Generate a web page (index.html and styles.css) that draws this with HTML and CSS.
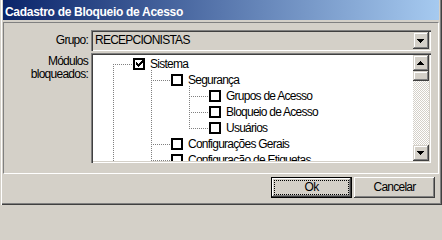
FILE: index.html
```html
<!DOCTYPE html>
<html lang="pt">
<head>
<meta charset="utf-8">
<title>Cadastro de Bloqueio de Acesso</title>
<link rel="stylesheet" href="styles.css">
</head>
<body>
<div class="window">
  <div class="titlebar">Cadastro de Bloqueio de Acesso</div>
  <div class="panel">
    <div class="form">
      <div class="lbl lbl-grupo">Grupo:</div>
      <div class="combo">
        <span class="combo-text">RECEPCIONISTAS</span>
        <span class="btn3d combo-btn"><svg width="7" height="4" viewBox="0 0 7 4"><path d="M0 0H7V1H6V2H5V3H4V4H3V3H2V2H1V1H0Z" fill="#000"/></svg></span>
      </div>
      <div class="lbl lbl-mod">Módulos<br>bloqueados:</div>
      <div class="tree">
        <div class="tree-canvas">
          <svg class="tree-lines" width="320" height="106" viewBox="0 0 320 106" shape-rendering="crispEdges">
            <g stroke="#808080" stroke-width="1" stroke-dasharray="1 1" fill="none">
              <path d="M20.5 9V106"/>
              <path d="M20 9.5H40"/>
              <path d="M58.5 15V106"/>
              <path d="M58 25.5H78"/>
              <path d="M58 89.5H78"/>
              <path d="M58 105.5H78"/>
              <path d="M96.5 31V74"/>
              <path d="M96 41.5H116"/>
              <path d="M96 57.5H116"/>
              <path d="M96 73.5H116"/>
            </g>
          </svg>
          <div class="node l0"><span class="chk"><svg width="8" height="8" viewBox="0 0 8 8"><path transform="translate(1 0)" d="M6 0h1v1h-1z M5 1h2v1h-2z M0 2h1v1h-1z M4 2h3v1h-3z M0 3h2v1h-2z M3 3h3v1h-3z M0 4h5v1h-5z M1 5h3v1h-3z M2 6h1v1h-1z" fill="#000"/></svg></span><span class="txt">Sistema</span></div>
          <div class="node l1"><span class="chk"></span><span class="txt">Segurança</span></div>
          <div class="node l2"><span class="chk"></span><span class="txt">Grupos de Acesso</span></div>
          <div class="node l2"><span class="chk"></span><span class="txt">Bloqueio de Acesso</span></div>
          <div class="node l2"><span class="chk"></span><span class="txt">Usuários</span></div>
          <div class="node l1"><span class="chk"></span><span class="txt">Configurações Gerais</span></div>
          <div class="node l1"><span class="chk"></span><span class="txt">Configuração de Etiquetas</span></div>
        </div>
        <div class="vscroll">
          <div class="btn3d sb-btn"><svg width="7" height="4" viewBox="0 0 7 4"><path d="M3 0H4V1H5V2H6V3H7V4H0V3H1V2H2V1H3Z" fill="#000"/></svg></div>
          <div class="btn3d sb-thumb"></div>
          <div class="sb-track"></div>
          <div class="btn3d sb-btn"><svg width="7" height="4" viewBox="0 0 7 4"><path d="M0 0H7V1H6V2H5V3H4V4H3V3H2V2H1V1H0Z" fill="#000"/></svg></div>
        </div>
      </div>
    </div>
  </div>
  <div class="footer">
    <button class="btn btn-default" type="button"><span class="focus">Ok</span></button>
    <button class="btn" type="button"><span class="cap">Cancelar</span></button>
  </div>
</div>
</body>
</html>
```
FILE: styles.css
```css
* { box-sizing: border-box; }

html, body {
  margin: 0;
  padding: 0;
  background: #d4d0c8;
}

body {
  width: 442px;
  height: 205px;
  overflow: hidden;
  font-family: "Liberation Sans", Arial, sans-serif;
  font-size: 12px;
  letter-spacing: -0.75px;
  color: #000;
}

.window {
  width: 442px;
  height: 205px;
  display: flex;
  flex-direction: column;
  padding: 0 3px 3px 3px;
  background: #d4d0c8;
  box-shadow:
    inset 1px 0 0 #d4d0c8,
    inset 2px 0 0 #ffffff,
    inset -1px -1px 0 #404040,
    inset -2px -2px 0 #808080;
}

.titlebar {
  flex: none;
  height: 20px;
  padding: 6px 0 0 2px;
  line-height: 13px;
  background: linear-gradient(to right, #0a246a, #a6caf0);
  color: #fff;
  font-weight: bold;
  font-size: 12px;
  letter-spacing: -0.3px;
  white-space: nowrap;
}

.panel {
  flex: none;
  height: 152px;
  margin-top: 2px;
  border-top: 1px solid #808080;
  border-left: 1px solid #808080;
  border-bottom: 1px solid #ffffff;
  border-right: 1px solid #ffffff;
  padding-top: 7px;
}

.form {
  display: grid;
  grid-template-columns: 84px 340px;
  column-gap: 3px;
  row-gap: 2px;
}

.lbl {
  text-align: right;
  white-space: nowrap;
}

.lbl-grupo {
  align-self: center;
  line-height: 13px;
}

.lbl-mod {
  align-self: start;
  padding-top: 2px;
  line-height: 13px;
}

.combo {
  height: 21px;
  display: flex;
  padding: 2px;
  background: #d4d0c8;
  box-shadow:
    inset 1px 1px 0 #808080,
    inset 2px 2px 0 #404040,
    inset -1px -1px 0 #ffffff,
    inset -2px -2px 0 #d4d0c8;
}

.combo-text {
  flex: 1;
  padding-left: 2px;
  line-height: 17px;
  white-space: nowrap;
}

.btn3d {
  background: #d4d0c8;
  box-shadow:
    inset -1px -1px 0 #404040,
    inset 1px 1px 0 #d4d0c8,
    inset -2px -2px 0 #808080,
    inset 2px 2px 0 #ffffff;
}

.combo-btn {
  flex: none;
  width: 16px;
  display: flex;
  align-items: center;
  justify-content: center;
}

.combo-btn svg,
.sb-btn svg {
  display: block;
  margin-left: -1px;
}

.tree {
  height: 110px;
  display: flex;
  padding: 2px;
  background: #ffffff;
  box-shadow:
    inset 1px 1px 0 #808080,
    inset 2px 2px 0 #404040,
    inset -1px -1px 0 #ffffff,
    inset -2px -2px 0 #d4d0c8;
}

.tree-canvas {
  flex: 1;
  position: relative;
  overflow: hidden;
  padding-top: 1px;
}

.tree-lines {
  position: absolute;
  left: 0;
  top: 0;
}

.node {
  position: relative;
  height: 16px;
  display: flex;
  align-items: center;
  line-height: 16px;
  white-space: nowrap;
}

.l0 { padding-left: 40px; }
.l1 { padding-left: 78px; }
.l2 { padding-left: 116px; }

.chk {
  flex: none;
  width: 12px;
  height: 12px;
  margin-right: 5px;
  border: 2px solid #000;
  background: #fff;
  display: flex;
}

.chk svg { display: block; }

.vscroll {
  flex: none;
  width: 16px;
  display: flex;
  flex-direction: column;
}

.sb-btn {
  flex: none;
  height: 16px;
  display: flex;
  align-items: center;
  justify-content: center;
}

.sb-thumb {
  flex: none;
  height: 10px;
}

.sb-track {
  flex: 1;
  background: repeating-conic-gradient(#ffffff 0 25%, #d4d0c8 0 50%) 0 0 / 2px 2px;
}

.footer {
  flex: 1;
  display: flex;
  justify-content: flex-end;
  align-items: flex-start;
  gap: 2px;
  padding: 3px 4px 0 0;
}

.btn {
  width: 81px;
  height: 21px;
  margin: 0;
  padding: 3px;
  border: 0;
  display: flex;
  font: inherit;
  letter-spacing: inherit;
  color: #000;
  background: #d4d0c8;
  box-shadow:
    inset -1px -1px 0 #404040,
    inset 1px 1px 0 #ffffff,
    inset -2px -2px 0 #808080,
    inset 2px 2px 0 #d4d0c8;
}

.btn-default {
  box-shadow:
    inset 0 0 0 1px #000000,
    inset -2px -2px 0 #404040,
    inset 2px 2px 0 #ffffff,
    inset -3px -3px 0 #808080;
}

.focus,
.cap {
  flex: 1;
  display: flex;
  align-items: center;
  justify-content: center;
  line-height: 13px;
}

.focus {
  border: 1px dotted #000;
}
```
